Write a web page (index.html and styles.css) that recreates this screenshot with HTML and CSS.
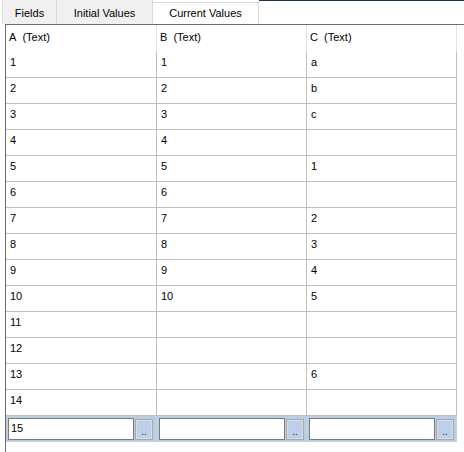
FILE: index.html
```html
<!DOCTYPE html>
<html lang="en">
<head>
<meta charset="utf-8"/>
<title>Current Values</title>
<link rel="stylesheet" href="styles.css">
</head>
<body>
  <div class="tabs">
    <div class="tab">Fields</div>
    <div class="tab tab-initial">Initial Values</div>
    <div class="tab tab-active">Current Values</div>
    <div class="tab-fill"></div>
  </div>

  <div class="panel">
    <div class="grid">
      <div class="head">A&nbsp; (Text)</div>
      <div class="head">B&nbsp; (Text)</div>
      <div class="head">C&nbsp; (Text)</div>

      <div class="cell">1</div><div class="cell">1</div><div class="cell">a</div>
      <div class="cell">2</div><div class="cell">2</div><div class="cell">b</div>
      <div class="cell">3</div><div class="cell">3</div><div class="cell">c</div>
      <div class="cell">4</div><div class="cell">4</div><div class="cell"></div>
      <div class="cell">5</div><div class="cell">5</div><div class="cell">1</div>
      <div class="cell">6</div><div class="cell">6</div><div class="cell"></div>
      <div class="cell">7</div><div class="cell">7</div><div class="cell">2</div>
      <div class="cell">8</div><div class="cell">8</div><div class="cell">3</div>
      <div class="cell">9</div><div class="cell">9</div><div class="cell">4</div>
      <div class="cell">10</div><div class="cell">10</div><div class="cell">5</div>
      <div class="cell">11</div><div class="cell"></div><div class="cell"></div>
      <div class="cell">12</div><div class="cell"></div><div class="cell"></div>
      <div class="cell">13</div><div class="cell"></div><div class="cell">6</div>
      <div class="cell">14</div><div class="cell"></div><div class="cell"></div>

      <div class="edit"><div class="box">15</div><div class="more"><span>..</span></div></div>
      <div class="edit"><div class="box"></div><div class="more"><span>..</span></div></div>
      <div class="edit"><div class="box"></div><div class="more"><span>..</span></div></div>
    </div>
  </div>
</body>
</html>
```

FILE: styles.css
```css
html, body {
  margin: 0;
  background: #ffffff;
  font-family: 'Liberation Sans', Arial, sans-serif;
  font-size: 11px;
  line-height: 13px;
  color: #000000;
  width: 464px;
  height: 452px;
  overflow: hidden;
}

.tabs {
  display: flex;
  height: 24px;
  padding-left: 2px;
}
.tab {
  box-sizing: border-box;
  width: 55px;
  height: 24px;
  background: #f0f0f0;
  border-right: 1px solid #d9d9d9;
  border-left: 1px solid #d9d9d9;
  display: flex;
  align-items: center;
  justify-content: center;
  padding-top: 3px;
  margin-right: -1px;
}
.tab-initial {
  width: 97px;
}
.tab-active {
  width: 107px;
  height: 22px;
  margin-top: 2px;
  background: #ffffff;
  border: 1px solid #d9d9d9;
  border-bottom: none;
  padding-top: 0;
  padding-bottom: 1px;
  margin-right: 0;
}
.tab-fill {
  flex: 1;
  border-top: 1px solid #1c3550;
  height: 0;
}

.panel {
  margin-left: 5px;
  border-left: 1px solid #6d6d6d;
  border-top: 1px solid #6d6d6d;
  height: 427px;
}

.grid {
  display: grid;
  grid-template-columns: 151px 150px 150px;
  grid-auto-rows: 26px;
  grid-template-rows: 27px;
}

.head {
  padding-left: 3px;
  padding-top: 6px;
  border-right: 1px solid #e3e3e3;
  box-shadow: inset 0 2px 0 #ffffff;
}
.cell {
  box-sizing: border-box;
  padding-left: 4px;
  padding-top: 4px;
  border-right: 1px solid #c0c0c0;
  border-bottom: 1px solid #c0c0c0;
}
.edit {
  box-sizing: border-box;
  background: #b9cde5;
  border-right: 1px solid #c8d0da;
  display: flex;
  align-items: center;
  padding-left: 2px;
  gap: 1px;
}
.box {
  box-sizing: border-box;
  width: 126px;
  height: 22px;
  background: #ffffff;
  border: 1px solid #7a7a7a;
  padding-left: 2px;
  padding-top: 3px;
}
.more {
  box-sizing: border-box;
  width: 18px;
  height: 21px;
  border: 2px solid #dcdcdc;
  outline: 1px solid #a8a8a8;
  outline-offset: -1px;
  background: #bcd0ea;
  display: flex;
  align-items: flex-end;
  justify-content: center;
  color: #1a1a5a;
  font-size: 10px;
  line-height: 12px;
}
```
